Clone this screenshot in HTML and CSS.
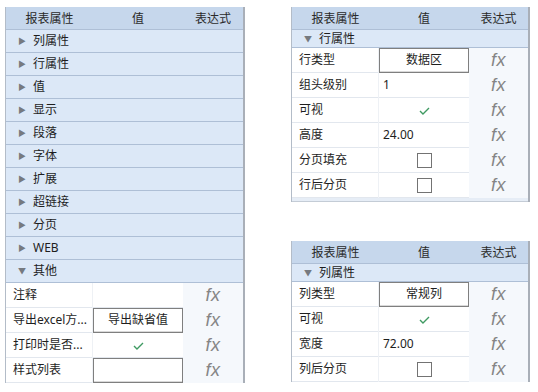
FILE: index.html
```html
<!DOCTYPE html>
<html lang="zh">
<head>
    <meta charset="UTF-8">
    <title>报表属性</title>
    <link rel="stylesheet" href="styles.css">
</head>
<body>
    <div class="page">
        <div class="grid-panel panel-main">
            <div class="grid-head">
                <div>报表属性</div>
                <div>值</div>
                <div>表达式</div>
            </div>
            <div class="group"><span class="arrow">&#9654;</span>列属性</div>
            <div class="group"><span class="arrow">&#9654;</span>行属性</div>
            <div class="group"><span class="arrow">&#9654;</span>值</div>
            <div class="group"><span class="arrow">&#9654;</span>显示</div>
            <div class="group"><span class="arrow">&#9654;</span>段落</div>
            <div class="group"><span class="arrow">&#9654;</span>字体</div>
            <div class="group"><span class="arrow">&#9654;</span>扩展</div>
            <div class="group"><span class="arrow">&#9654;</span>超链接</div>
            <div class="group"><span class="arrow">&#9654;</span>分页</div>
            <div class="group"><span class="arrow">&#9654;</span>WEB</div>
            <div class="group open"><span class="arrow">&#9660;</span>其他</div>
            <div class="prop">
                <div class="name">注释</div>
                <div class="value"></div>
                <div class="fx">fx</div>
            </div>
            <div class="prop">
                <div class="name">导出excel方...</div>
                <div class="value box">导出缺省值</div>
                <div class="fx">fx</div>
            </div>
            <div class="prop">
                <div class="name">打印时是否...</div>
                <div class="value center">
                    <svg class="check" width="11" height="8" viewBox="0 0 11 8"><polyline points="1,4 4,7 10,1" fill="none" stroke="#3f9a62" stroke-width="1.4"/></svg>
                </div>
                <div class="fx">fx</div>
            </div>
            <div class="prop">
                <div class="name">样式列表</div>
                <div class="value box"></div>
                <div class="fx">fx</div>
            </div>
        </div>

        <div class="side">
            <div class="grid-panel panel-row">
                <div class="grid-head">
                    <div>报表属性</div>
                    <div>值</div>
                    <div>表达式</div>
                </div>
                <div class="group open small"><span class="arrow">&#9660;</span>行属性</div>
                <div class="prop">
                    <div class="name">行类型</div>
                    <div class="value box">数据区</div>
                    <div class="fx">fx</div>
                </div>
                <div class="prop">
                    <div class="name">组头级别</div>
                    <div class="value">1</div>
                    <div class="fx">fx</div>
                </div>
                <div class="prop">
                    <div class="name">可视</div>
                    <div class="value center">
                        <svg class="check" width="11" height="8" viewBox="0 0 11 8"><polyline points="1,4 4,7 10,1" fill="none" stroke="#3f9a62" stroke-width="1.4"/></svg>
                    </div>
                    <div class="fx">fx</div>
                </div>
                <div class="prop">
                    <div class="name">高度</div>
                    <div class="value">24.00</div>
                    <div class="fx">fx</div>
                </div>
                <div class="prop">
                    <div class="name">分页填充</div>
                    <div class="value center"><span class="checkbox"></span></div>
                    <div class="fx">fx</div>
                </div>
                <div class="prop">
                    <div class="name">行后分页</div>
                    <div class="value center"><span class="checkbox"></span></div>
                    <div class="fx">fx</div>
                </div>
                <div class="panel-foot"></div>
            </div>

            <div class="grid-panel panel-col">
                <div class="grid-head">
                    <div>报表属性</div>
                    <div>值</div>
                    <div>表达式</div>
                </div>
                <div class="group open small"><span class="arrow">&#9660;</span>列属性</div>
                <div class="prop">
                    <div class="name">列类型</div>
                    <div class="value box">常规列</div>
                    <div class="fx">fx</div>
                </div>
                <div class="prop">
                    <div class="name">可视</div>
                    <div class="value center">
                        <svg class="check" width="11" height="8" viewBox="0 0 11 8"><polyline points="1,4 4,7 10,1" fill="none" stroke="#3f9a62" stroke-width="1.4"/></svg>
                    </div>
                    <div class="fx">fx</div>
                </div>
                <div class="prop">
                    <div class="name">宽度</div>
                    <div class="value">72.00</div>
                    <div class="fx">fx</div>
                </div>
                <div class="prop">
                    <div class="name">列后分页</div>
                    <div class="value center"><span class="checkbox"></span></div>
                    <div class="fx">fx</div>
                </div>
            </div>
        </div>
    </div>
</body>
</html>
```

FILE: styles.css
```css
body {
    margin: 0;
    padding: 0;
    background-color: #fff;
    color: #1e1e1e;
    font-family: "Noto Sans", "Noto Sans CJK SC", sans-serif;
    font-size: 12px;
}
.page {
    display: flex;
    align-items: flex-start;
    padding: 7px 0 0 5px;
}
.grid-panel {
    width: 240px;
    box-sizing: border-box;
    border-left: 1px solid #b3bcc8;
    border-right: 2px solid #a9afb8;
    background-color: #fff;
}
.grid-head {
    display: grid;
    grid-template-columns: 87px 90px 1fr;
    height: 22px;
    align-items: center;
    text-align: center;
    color: #2a2a2a;
    background-color: #c6d7ec;
    border-bottom: 1px solid #aebfd6;
}
.group {
    height: 22px;
    line-height: 22px;
    padding-left: 12px;
    background-color: #dce8f7;
    border-bottom: 1px solid #aebfd6;
}
.group.small {
    height: 17px;
    line-height: 17px;
}
.arrow {
    display: inline-block;
    width: 15px;
    font-size: 8px;
    color: #767a80;
    vertical-align: top;
}
.prop {
    display: grid;
    grid-template-columns: 87px 90px 1fr;
    height: 24px;
    border-bottom: 1px solid #e2e7ee;
}
.name {
    padding-left: 7px;
    line-height: 24px;
    white-space: nowrap;
    overflow: hidden;
    border-right: 1px solid #eef1f5;
}
.value {
    padding-left: 4px;
    line-height: 24px;
}
.value.center {
    display: flex;
    align-items: center;
    justify-content: center;
    padding-left: 0;
}
.value.box {
    padding-left: 0;
    text-align: center;
    line-height: 22px;
    border: 1px solid #7f7f7f;
    box-shadow: inset 0 -1px 0 #d9d9d9;
}
.fx {
    background-color: #f5f8fc;
    color: #858585;
    font-family: "Liberation Sans", sans-serif;
    font-style: italic;
    font-size: 18px;
    line-height: 25px;
    text-align: center;
    letter-spacing: 0.5px;
}
.checkbox {
    width: 13px;
    height: 13px;
    border: 1px solid #737373;
    background-color: #fff;
}
.side {
    display: flex;
    flex-direction: column;
    gap: 39px;
    margin-left: 46px;
}
.panel-row {
    width: 239px;
}
.panel-col {
    width: 239px;
}
.panel-foot {
    height: 3px;
    background-color: #e6edf6;
    border-bottom: 1px solid #c4ccd6;
}
```
